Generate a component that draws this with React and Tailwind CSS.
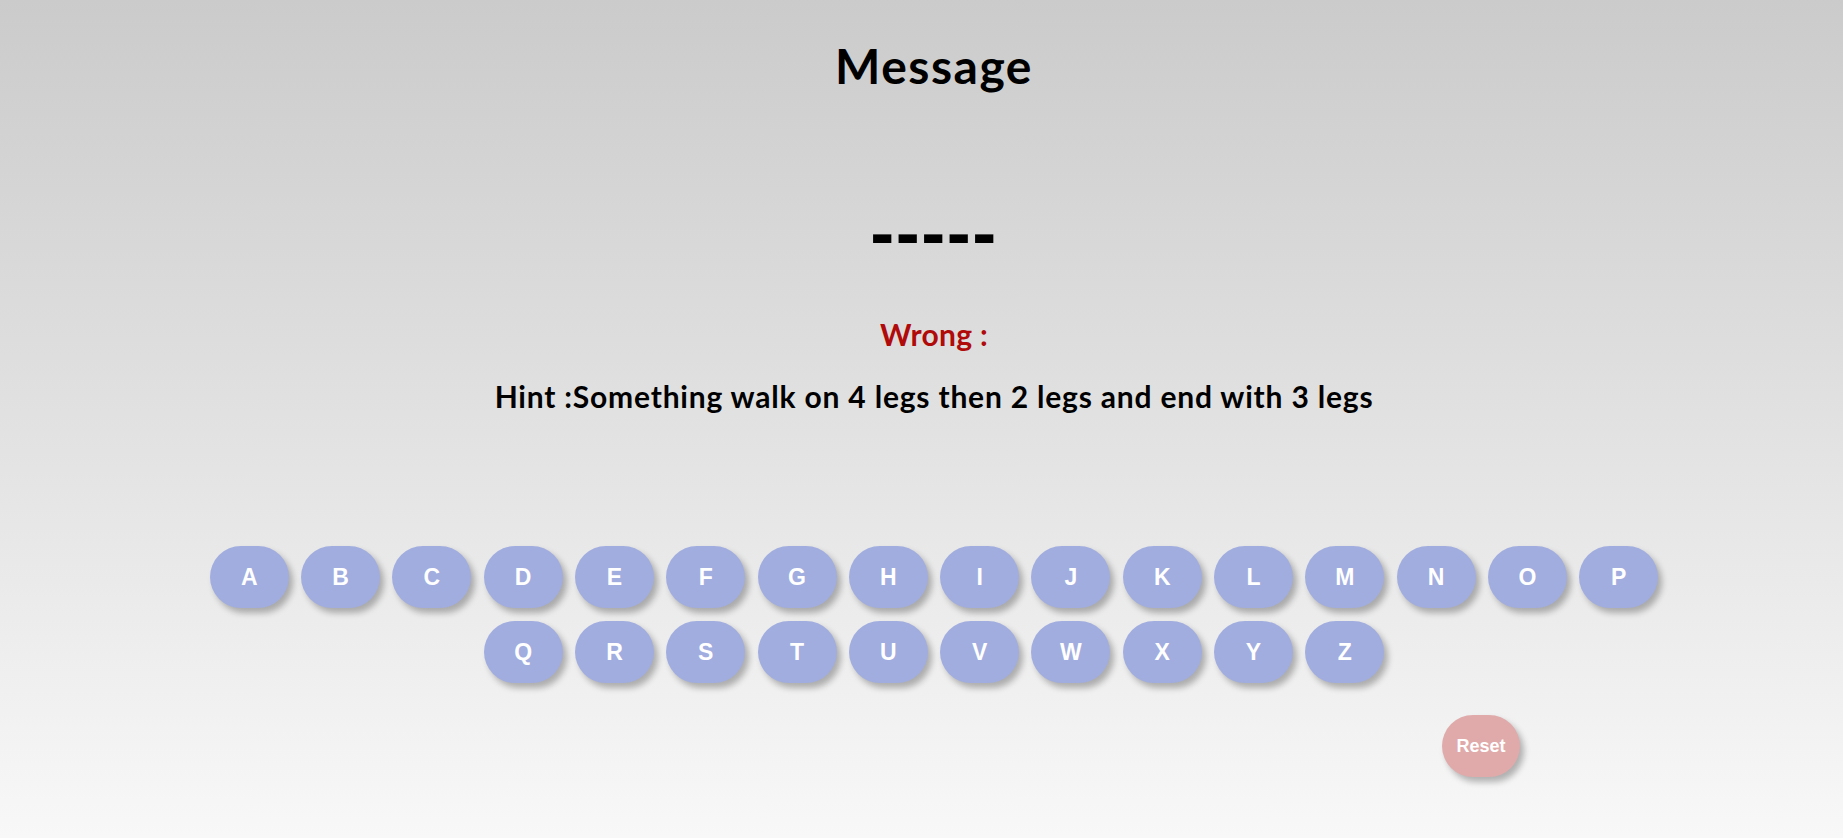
const row1 = ['A', 'B', 'C', 'D', 'E', 'F', 'G', 'H', 'I', 'J', 'K', 'L', 'M', 'N', 'O', 'P']
const row2 = ['Q', 'R', 'S', 'T', 'U', 'V', 'W', 'X', 'Y', 'Z']

function Key({ letter }) {
  return (
    <button className="w-[79px] h-[62px] rounded-[31px] bg-[#a1addf] text-white text-[23px] font-bold font-['Liberation_Sans',Arial,sans-serif] shadow-[4px_5px_6px_rgba(0,0,0,0.28)]">
      {letter}
    </button>
  )
}

export default function App() {
  return (
    <div className="h-[838px] w-full pl-[25px] bg-linear-to-b from-[#cbcbcb] to-[#f8f8f8] font-['Lato',sans-serif] text-black">
      <h1 className="pt-[36px] text-center text-[48px] leading-[60px] font-bold tracking-[1.5px]">Message</h1>

      <div className="mt-[116px] text-center text-[72px] leading-[40px] font-bold tracking-[1.5px] font-['Liberation_Sans',Arial,sans-serif]">
        -----
      </div>

      <p className="mt-[65px] text-center text-[30px] leading-[34px] font-bold tracking-[0.3px] text-[#b00a0a]">Wrong :</p>

      <p className="mt-[28px] text-center text-[30px] leading-[34px] font-bold tracking-[0.8px]">
        Hint :Something walk on 4 legs then 2 legs and end with 3 legs
      </p>

      <div className="mt-[133px] flex flex-col items-center gap-y-[13px]">
        <div className="flex gap-x-[12.3px]">
          {row1.map((l) => (
            <Key key={l} letter={l} />
          ))}
        </div>
        <div className="flex gap-x-[12.3px]">
          {row2.map((l) => (
            <Key key={l} letter={l} />
          ))}
        </div>
      </div>

      <div className="mt-[32px] flex justify-end pr-[323px]">
        <button className="w-[78px] h-[62px] rounded-[31px] bg-[#e0aaaa] text-white text-[18px] font-bold font-['Liberation_Sans',Arial,sans-serif] shadow-[4px_5px_6px_rgba(0,0,0,0.28)]">
          Reset
        </button>
      </div>
    </div>
  )
}
